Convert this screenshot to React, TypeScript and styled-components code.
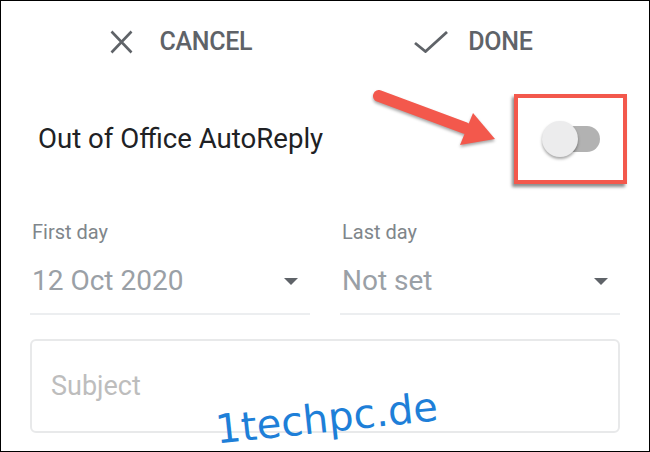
import styled, { createGlobalStyle } from "styled-components";

const GlobalStyle = createGlobalStyle`
    body {
        margin: 0;
        font-family: Roboto, "Liberation Sans", sans-serif;
        background: #fff;
    }
`;

const Frame = styled.div`
    position: relative;
    width: 650px;
    height: 452px;
    box-sizing: border-box;
    border: 1px solid #000;
    background: #fff;
    overflow: hidden;
    display: flex;
    flex-direction: column;
`;

const Header = styled.div`
    height: 82px;
    display: flex;
    align-items: center;
    justify-content: center;
    gap: 162px;
    padding-right: 8px;
`;

const HeaderButton = styled.div<{ $gap: number }>`
    display: flex;
    align-items: center;
    gap: ${p => p.$gap}px;
    color: #5f6368;
    font-size: 25px;
    font-weight: 500;
    letter-spacing: -0.3px;
    line-height: 30px;
`;

const ToggleRow = styled.div`
    height: 112px;
    display: flex;
    align-items: center;
    justify-content: space-between;
    padding: 0 22px 0 37px;
`;

const RowTitle = styled.div`
    font-size: 27.6px;
    color: #202124;
    line-height: 32px;
`;

const Highlight = styled.div`
    width: 113px;
    height: 90px;
    box-sizing: border-box;
    border: 4px solid #f3584c;
    box-shadow: -2px 3px 3px rgba(0, 0, 0, 0.45);
    display: flex;
    align-items: center;
    justify-content: center;
`;

const Track = styled.div`
    position: relative;
    width: 52px;
    height: 26px;
    margin-left: 6px;
    border-radius: 13px;
    background: #b2b2b2;
`;

const Thumb = styled.div`
    position: absolute;
    left: -6px;
    top: -5px;
    width: 36px;
    height: 36px;
    border-radius: 50%;
    background: #ececed;
    box-shadow: 0 2px 3px rgba(0, 0, 0, 0.35);
`;

const Fields = styled.div`
    display: grid;
    grid-template-columns: 1fr 1fr;
    gap: 30px;
    padding: 25px 29px 0;
`;

const Field = styled.div`
    display: flex;
    flex-direction: column;
    gap: 20px;
    padding: 0 0 15px 2px;
    border-bottom: 2px solid #eceef0;
`;

const Label = styled.div`
    font-size: 20px;
    line-height: 24px;
    color: #80868b;
`;

const ValueRow = styled.div`
    display: flex;
    align-items: center;
    justify-content: space-between;
    padding-right: 12px;
    font-size: 28px;
    line-height: 34px;
    color: #9aa0a6;
`;

const Caret = styled.div`
    width: 0;
    height: 0;
    border-left: 7.5px solid transparent;
    border-right: 7.5px solid transparent;
    border-top: 7px solid #5f6368;
`;

const SubjectBox = styled.div`
    margin: 24px 29px 0;
    height: 94px;
    box-sizing: border-box;
    border: 2px solid #e8e9ea;
    border-radius: 6px;
    display: flex;
    align-items: center;
    padding-left: 19px;
    font-size: 27px;
    color: #bdbdbd;
`;

const Arrow = styled.svg`
    position: absolute;
    left: 360px;
    top: 80px;
    filter: drop-shadow(0 2px 1.5px rgba(0, 0, 0, 0.35));
`;

const Watermark = styled.div`
    position: absolute;
    left: 214px;
    top: 397px;
    font-family: "DejaVu Sans", sans-serif;
    font-size: 40px;
    line-height: 40px;
    color: #1e7fd8;
    transform: rotate(-6deg);
    white-space: nowrap;
`;

function App() {
    return (
        <>
            <GlobalStyle />
            <Frame>
                <Header>
                    <HeaderButton $gap={27}>
                        <svg width="23" height="24" viewBox="0 0 23 24">
                            <path d="M1.5 1.5 L21.5 22.5 M21.5 1.5 L1.5 22.5" stroke="#5f6368" strokeWidth="2.6" fill="none" />
                        </svg>
                        CANCEL
                    </HeaderButton>
                    <HeaderButton $gap={20}>
                        <svg width="34" height="22" viewBox="0 0 34 22">
                            <polyline points="1,12 11.5,20.5 33,1" stroke="#5f6368" strokeWidth="2.8" fill="none" />
                        </svg>
                        DONE
                    </HeaderButton>
                </Header>

                <ToggleRow>
                    <RowTitle>Out of Office AutoReply</RowTitle>
                    <Highlight>
                        <Track>
                            <Thumb />
                        </Track>
                    </Highlight>
                </ToggleRow>

                <Fields>
                    <Field>
                        <Label>First day</Label>
                        <ValueRow>
                            12 Oct 2020
                            <Caret />
                        </ValueRow>
                    </Field>
                    <Field>
                        <Label>Last day</Label>
                        <ValueRow>
                            Not set
                            <Caret />
                        </ValueRow>
                    </Field>
                </Fields>

                <SubjectBox>Subject</SubjectBox>

                <Arrow width="150" height="80" viewBox="0 0 150 80">
                    <line x1="18" y1="15" x2="104" y2="47" stroke="#f3584c" strokeWidth="12" strokeLinecap="round" />
                    <polygon points="112,32 134,58 99,64" fill="#f3584c" />
                </Arrow>

                <Watermark>1techpc.de</Watermark>
            </Frame>
        </>
    );
}

export default App;
